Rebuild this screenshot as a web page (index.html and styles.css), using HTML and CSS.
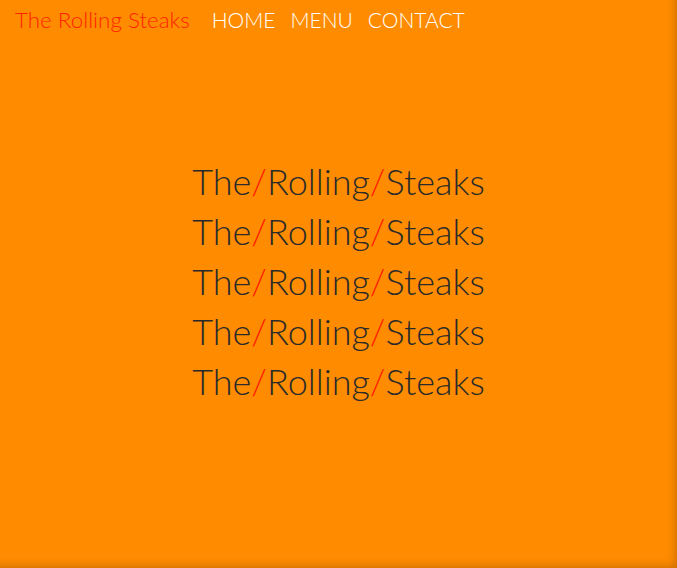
FILE: index.html
```html
<!DOCTYPE html>
<html lang="en">
<head>
<meta charset="utf-8">
<title>The Rolling Steaks</title>
<link rel="stylesheet" href="styles.css">
</head>
<body>
<div class="page">
  <header class="nav">
    <a class="logo" href="#">The Rolling Steaks</a>
    <nav class="links">
      <a href="#">HOME</a>
      <a href="#">MENU</a>
      <a href="#">CONTACT</a>
    </nav>
  </header>
  <main class="hero">
    <p class="line">The<span class="slash">/</span>Rolling<span class="slash">/</span>Steaks</p>
    <p class="line">The<span class="slash">/</span>Rolling<span class="slash">/</span>Steaks</p>
    <p class="line">The<span class="slash">/</span>Rolling<span class="slash">/</span>Steaks</p>
    <p class="line">The<span class="slash">/</span>Rolling<span class="slash">/</span>Steaks</p>
    <p class="line">The<span class="slash">/</span>Rolling<span class="slash">/</span>Steaks</p>
  </main>
</div>
</body>
</html>
```

FILE: styles.css
```css
html, body {
  margin: 0;
  padding: 0;
  height: 100%;
}
body {
  background: #ff8c00;
  font-family: "Lato", "Open Sans", sans-serif;
  font-weight: 300;
}
.page {
  height: 100%;
  display: flex;
  flex-direction: column;
  box-shadow: inset -6px -6px 8px -4px rgba(120, 60, 0, 0.35);
}
.nav {
  display: flex;
  align-items: baseline;
  padding: 6px 15px 0;
  height: 40px;
  box-sizing: border-box;
}
.nav a {
  text-decoration: none;
}
.logo {
  color: #ff2200;
  font-size: 22.4px;
  margin-right: 22px;
}
.links {
  display: flex;
  gap: 15px;
}
.links a {
  color: #ffffff;
  font-size: 21px;
}
.hero {
  flex: 1;
  display: flex;
  flex-direction: column;
  justify-content: center;
  align-items: center;
  padding-bottom: 46px;
}
.line {
  margin: 0;
  font-size: 36px;
  line-height: 50px;
  color: #2a2a2a;
}
.slash {
  color: #ff1a00;
}
```
